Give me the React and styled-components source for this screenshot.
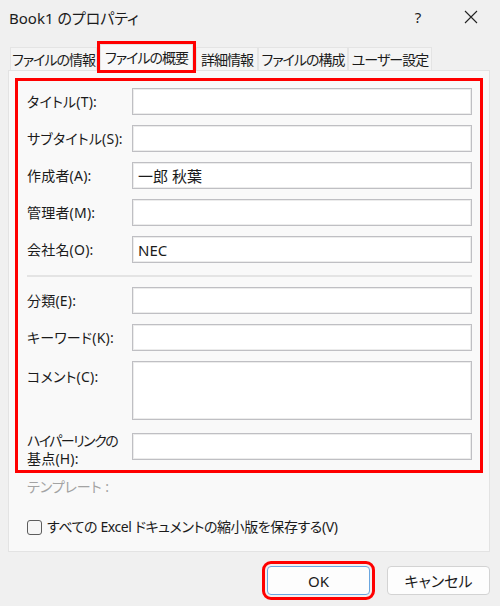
import React from 'react';
import styled, { createGlobalStyle } from 'styled-components';

const GlobalStyle = createGlobalStyle`
  html, body {
    margin: 0;
    padding: 0;
    background: #f0f0f0;
  }
  body {
    font-family: "Noto Sans", "Noto Sans CJK JP", sans-serif;
    font-feature-settings: "palt";
    color: #1b1b1b;
  }
`;

const Window = styled.div`
  width: 500px;
  height: 606px;
  background: #f0f0f0;
  display: flex;
  flex-direction: column;
  font-size: 14px;
`;

const TitleBar = styled.div`
  height: 34px;
  display: flex;
  align-items: center;
  padding-left: 9px;
`;

const Caption = styled.div`
  flex: 1;
  font-size: 15px;
`;

const TitleButton = styled.div`
  width: 46px;
  height: 34px;
  display: flex;
  align-items: center;
  justify-content: center;
  font-size: 15px;
  color: #222;
`;

const TabBar = styled.div`
  margin-top: 10px;
  height: 26px;
  padding-left: 10px;
  display: flex;
  align-items: flex-end;
  position: relative;
  z-index: 1;
`;

const Tab = styled.div`
  width: ${({ $w }) => $w}px;
  height: ${({ $active }) => ($active ? 26 : 23)}px;
  margin: ${({ $active }) => ($active ? '0 3px' : '0')};
  box-sizing: border-box;
  display: flex;
  align-items: center;
  justify-content: center;
  background: ${({ $active }) => ($active ? '#f9f9f9' : '#f4f4f4')};
  border: 1px solid #e4e4e4;
  border-bottom: none;
  outline: ${({ $active }) => ($active ? '3px solid #ff0000' : 'none')};
  white-space: nowrap;
  font-size: 14px;
  letter-spacing: -1px;
  padding-bottom: 1px;
`;

const Panel = styled.div`
  margin: 0 10px 0 8px;
  height: 482px;
  box-sizing: border-box;
  border: 1px solid #e3e3e3;
  background: #f9f9f9;
  padding: 7px 6px 0 6px;
  display: flex;
  flex-direction: column;
`;

const Highlight = styled.div`
  border: 3px solid #ff0000;
  padding: 7px 8px 2px 9px;
  display: flex;
  flex-direction: column;
`;

const Row = styled.div`
  display: flex;
  align-items: ${({ $top }) => ($top ? 'flex-start' : 'center')};
  margin-top: ${({ $mt }) => $mt}px;
`;

const Label = styled.div`
  width: 105px;
  flex-shrink: 0;
  font-size: 14px;
  line-height: 18px;
  letter-spacing: 0.2px;
  padding-top: ${({ $pt }) => $pt || 0}px;
  white-space: nowrap;
`;

const LabelLine = styled.div`
  letter-spacing: ${({ $tight }) => ($tight ? '-1.5px' : '0.2px')};
`;

const Field = styled.div`
  flex: 1;
  height: ${({ $h }) => $h}px;
  margin-top: ${({ $mt }) => $mt || 0}px;
  box-sizing: border-box;
  background: #fff;
  border: 1px solid #bfbfc3;
  box-shadow: inset 0 0 0 1px #ececec;
  display: flex;
  align-items: center;
  padding-left: 5px;
  font-size: 15px;
`;

const Divider = styled.div`
  height: 2px;
  background: #e4e4e4;
  margin: 12px 0 10px 0;
`;

const Muted = styled.div`
  margin: 5px 0 0 12px;
  color: #a3a3a3;
  font-size: 14px;
  line-height: 18px;
`;

const CheckRow = styled.label`
  margin: 22px 0 0 12px;
  display: flex;
  align-items: center;
  gap: 5px;
  font-size: 14px;
  letter-spacing: -0.4px;
  line-height: 18px;
`;

const Box = styled.span`
  width: 15px;
  height: 15px;
  box-sizing: border-box;
  border: 1px solid #5d5d5d;
  border-radius: 3px;
  background: #f6f6f6;
`;

const Footer = styled.div`
  display: flex;
  justify-content: flex-end;
  gap: 17px;
  padding: 14px 10px 0 0;
`;

const Button = styled.div`
  width: 103px;
  height: 29px;
  box-sizing: border-box;
  border: 1px solid ${({ $primary }) => ($primary ? '#6aa6e0' : '#d3d3d3')};
  border-radius: 4px;
  background: #fdfdfd;
  display: flex;
  align-items: center;
  justify-content: center;
  font-size: 15px;
  outline: ${({ $mark }) => ($mark ? '3px solid #ff0000' : 'none')};
  outline-offset: 2px;
`;

const tabs = [
  { name: 'ファイルの情報', w: 87 },
  { name: 'ファイルの概要', w: 93, active: true },
  { name: '詳細情報', w: 62 },
  { name: 'ファイルの構成', w: 90 },
  { name: 'ユーザー設定', w: 84 },
];

const firstGroup = [
  { label: 'タイトル(T):', value: '' },
  { label: 'サブタイトル(S):', value: '' },
  { label: '作成者(A):', value: '一郎 秋葉' },
  { label: '管理者(M):', value: '' },
  { label: '会社名(O):', value: 'NEC' },
];

const CloseIcon = () => (
  <svg width="14" height="14" viewBox="0 0 14 14">
    <path d="M1 1 L13 13 M13 1 L1 13" stroke="#222" strokeWidth="1.1" fill="none" />
  </svg>
);

const App = () => (
  <Window>
    <GlobalStyle />
    <TitleBar>
      <Caption>Book1 のプロパティ</Caption>
      <TitleButton>?</TitleButton>
      <TitleButton style={{ marginLeft: 7, marginRight: 6 }}>
        <CloseIcon />
      </TitleButton>
    </TitleBar>
    <TabBar>
      {tabs.map((t) => (
        <Tab key={t.name} $w={t.w} $active={t.active}>
          {t.name}
        </Tab>
      ))}
    </TabBar>
    <Panel>
      <Highlight>
        {firstGroup.map((r, i) => (
          <Row key={r.label} $mt={i === 0 ? 0 : 10}>
            <Label>{r.label}</Label>
            <Field $h={27}>{r.value}</Field>
          </Row>
        ))}
        <Divider />
        <Row $mt={0}>
          <Label>分類(E):</Label>
          <Field $h={27} />
        </Row>
        <Row $mt={10}>
          <Label>キーワード(K):</Label>
          <Field $h={27} />
        </Row>
        <Row $mt={10} $top>
          <Label $pt={7}>コメント(C):</Label>
          <Field $h={59} />
        </Row>
        <Row $mt={12} $top>
          <Label>
            <LabelLine $tight>ハイパーリンクの</LabelLine>
            <LabelLine>基点(H):</LabelLine>
          </Label>
          <Field $h={27} $mt={1} />
        </Row>
      </Highlight>
      <Muted>テンプレート :</Muted>
      <CheckRow>
        <Box />
        すべての Excel ドキュメントの縮小版を保存する(V)
      </CheckRow>
    </Panel>
    <Footer>
      <Button $primary $mark>
        OK
      </Button>
      <Button>キャンセル</Button>
    </Footer>
  </Window>
);

export default App;
